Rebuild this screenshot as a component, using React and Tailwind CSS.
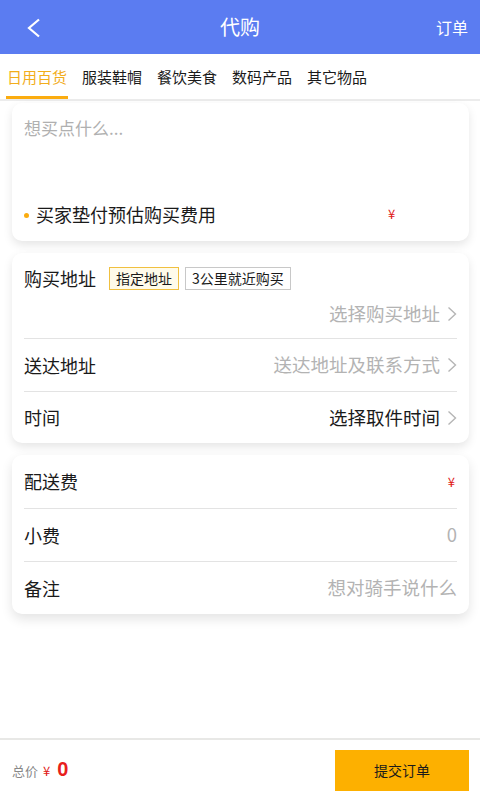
import React from "react";

const Chevron = () => (
  <svg width="10" height="16" viewBox="0 0 10 16" className="ml-[7px]">
    <polyline points="1.5,1.5 8.5,8 1.5,14.5" fill="none" stroke="#b5b5b5" strokeWidth="1.4" />
  </svg>
);

const tabs = ["日用百货", "服装鞋帽", "餐饮美食", "数码产品", "其它物品"];

const Row = ({ label, children, h = "h-[52px]", last }) => (
  <div className={`flex items-center justify-between ${h} ${last ? "" : "border-b border-[#e3e3e3]"}`}>
    <span className="text-[18px] text-[#1a1a1a]">{label}</span>
    <div className="flex items-center">{children}</div>
  </div>
);

export default function App() {
  return (
    <div
      className="flex flex-col min-h-[800px] w-[480px] bg-white"
      style={{ fontFamily: '"Noto Sans CJK SC", "Noto Sans", sans-serif' }}
    >
      {/* header */}
      <div className="relative flex items-center justify-center h-[54px] bg-[#5b7cf1] text-white">
        <svg width="16" height="20" viewBox="0 0 16 20" className="absolute left-[26px] top-[18px]">
          <polyline points="13,1.5 3,10 13,18.5" fill="none" stroke="white" strokeWidth="2.2" />
        </svg>
        <span className="text-[20px] leading-none">代购</span>
        <span className="absolute right-[12px] text-[16px] leading-none">订单</span>
      </div>

      {/* tabs */}
      <div className="flex h-[47px] pl-[6px] gap-[13px] border-b-2 border-[#ececec]">
        {tabs.map((t, i) => (
          <div
            key={t}
            className={`flex items-center justify-center w-[62px] text-[15px] border-b-[3px] ${
              i === 0 ? "text-[#f2ad1c] border-[#fbac0f]" : "text-[#1a1a1a] border-transparent"
            }`}
          >
            <span className="pt-[4px]">{t}</span>
          </div>
        ))}
      </div>

      <div className="flex-1 flex flex-col gap-[12px] pt-[2px] pl-[12px] pr-[11px]">
        {/* card 1 */}
        <div className="h-[138px] rounded-[10px] bg-white shadow-[0_4px_10px_rgba(0,0,0,0.10)] px-[12px] flex flex-col">
          <div className="pt-[12px] text-[17px] text-[#b0b0b0] leading-[26px]">想买点什么...</div>
          <div className="mt-auto mb-[14px] flex items-center h-[26px]">
            <span className="w-[5px] h-[5px] rounded-full bg-[#fbac0f] mr-[7px] mt-[2px]"></span>
            <span className="text-[18px] text-[#1a1a1a]">买家垫付预估购买费用</span>
            <span className="ml-[172px] text-[13px] text-[#e02020]">¥</span>
          </div>
        </div>

        {/* card 2 */}
        <div className="rounded-[10px] bg-white shadow-[0_4px_10px_rgba(0,0,0,0.10)] px-[12px]">
          <div className="flex flex-col h-[86px] border-b border-[#e3e3e3]">
            <div className="flex items-center h-[50px]">
              <span className="text-[18px] text-[#1a1a1a]">购买地址</span>
              <span className="ml-[13px] h-[23px] px-[6px] flex items-center border border-[#f0c040] bg-[#fffbea] text-[14px] text-[#1a1a1a]">
                指定地址
              </span>
              <span className="ml-[6px] h-[23px] px-[6px] flex items-center border border-[#c8c8c8] text-[14px] text-[#1a1a1a]">
                3公里就近购买
              </span>
            </div>
            <div className="flex items-center justify-end h-[26px] mt-[-2px]">
              <span className="text-[18.5px] text-[#b3b3b3]">选择购买地址</span>
              <Chevron />
            </div>
          </div>
          <Row label="送达地址" h="h-[53px]">
            <span className="text-[18.5px] text-[#b3b3b3]">送达地址及联系方式</span>
            <Chevron />
          </Row>
          <Row label="时间" h="h-[51px]" last>
            <span className="text-[18.5px] text-[#1a1a1a]">选择取件时间</span>
            <Chevron />
          </Row>
        </div>

        {/* card 3 */}
        <div className="rounded-[10px] bg-white shadow-[0_5px_12px_rgba(0,0,0,0.11)] px-[12px]">
          <Row label="配送费" h="h-[54px]">
            <span className="text-[13px] text-[#e02020] mr-[2px]">¥</span>
          </Row>
          <Row label="小费" h="h-[53px]">
            <span className="text-[18.5px] text-[#b3b3b3]">0</span>
          </Row>
          <Row label="备注" h="h-[52px]" last>
            <span className="text-[18.5px] text-[#b3b3b3]">想对骑手说什么</span>
          </Row>
        </div>
      </div>

      {/* footer */}
      <div className="flex items-center justify-between h-[62px] border-t-2 border-[#e8e8e6] pl-[12px] pr-[11px]">
        <div className="flex items-baseline">
          <span className="text-[13px] text-[#888]">总价</span>
          <span className="ml-[5px] text-[13px] text-[#e02020]">¥</span>
          <span className="ml-[7px] text-[20px] font-bold text-[#e8201c] leading-none" style={{ fontFamily: '"Liberation Sans", sans-serif' }}>0</span>
        </div>
        <button className="w-[134px] h-[41px] bg-[#fdb000] text-[14px] text-[#1a1a1a]">提交订单</button>
      </div>
    </div>
  );
}
